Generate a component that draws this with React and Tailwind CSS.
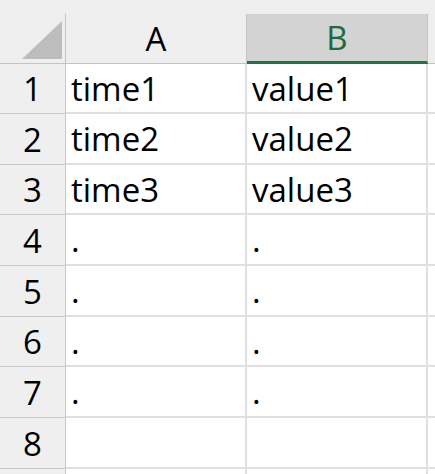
import React from "react";

const rows = [
  { n: "1", a: "time1", b: "value1", h: "h-[50px]" },
  { n: "2", a: "time2", b: "value2", h: "h-[51px]" },
  { n: "3", a: "time3", b: "value3", h: "h-[50px]" },
  { n: "4", a: ".", b: ".", h: "h-[51px]" },
  { n: "5", a: ".", b: ".", h: "h-[51px]" },
  { n: "6", a: ".", b: ".", h: "h-[50px]" },
  { n: "7", a: ".", b: ".", h: "h-[51px]" },
  { n: "8", a: "", b: "", h: "h-[51px]" },
  { n: "", a: "", b: "", h: "h-[51px]" },
];

export default function App() {
  return (
    <div
      className="w-[435px] h-[474px] overflow-hidden bg-white text-black text-[33px] leading-none"
      style={{ fontFamily: '"Open Sans", "Noto Sans", sans-serif' }}
    >
      <div className="h-[64px] bg-[#efefef] flex items-end">
        <div className="w-[66px] h-[50px] border-r border-b border-[#c4c4c4] flex-none">
          <svg width="65" height="49" viewBox="0 0 65 49">
            <polygon points="62,7 22,45 62,45" fill="#bdbdbd" />
          </svg>
        </div>
        <div className="w-[181px] h-[50px] border-r border-b border-[#c4c4c4] flex items-center justify-center flex-none">
          A
        </div>
        <div className="w-[181px] h-[50px] bg-[#d3d3d3] border-r border-[#c4c4c4] border-b-[3px] border-b-[#217346] flex items-center justify-center text-[#1e6b3a] flex-none">
          B
        </div>
        <div className="flex-1 h-[50px] border-b border-[#c4c4c4]" />
      </div>
      {rows.map((r, i) => (
        <div key={i} className={`flex ${r.h}`}>
          <div className="w-[66px] bg-[#efefef] border-r border-b border-[#c8c8c8] flex items-center justify-center flex-none">
            {r.n}
          </div>
          <div className="w-[181px] border-r-2 border-b-2 border-[#e0e0e0] flex items-center pl-[5px] flex-none">
            {r.a}
          </div>
          <div className="w-[181px] border-r-2 border-b-2 border-[#e0e0e0] flex items-center pl-[5px] flex-none">
            {r.b}
          </div>
          <div className="flex-1 border-b-2 border-[#e0e0e0]" />
        </div>
      ))}
    </div>
  );
}
